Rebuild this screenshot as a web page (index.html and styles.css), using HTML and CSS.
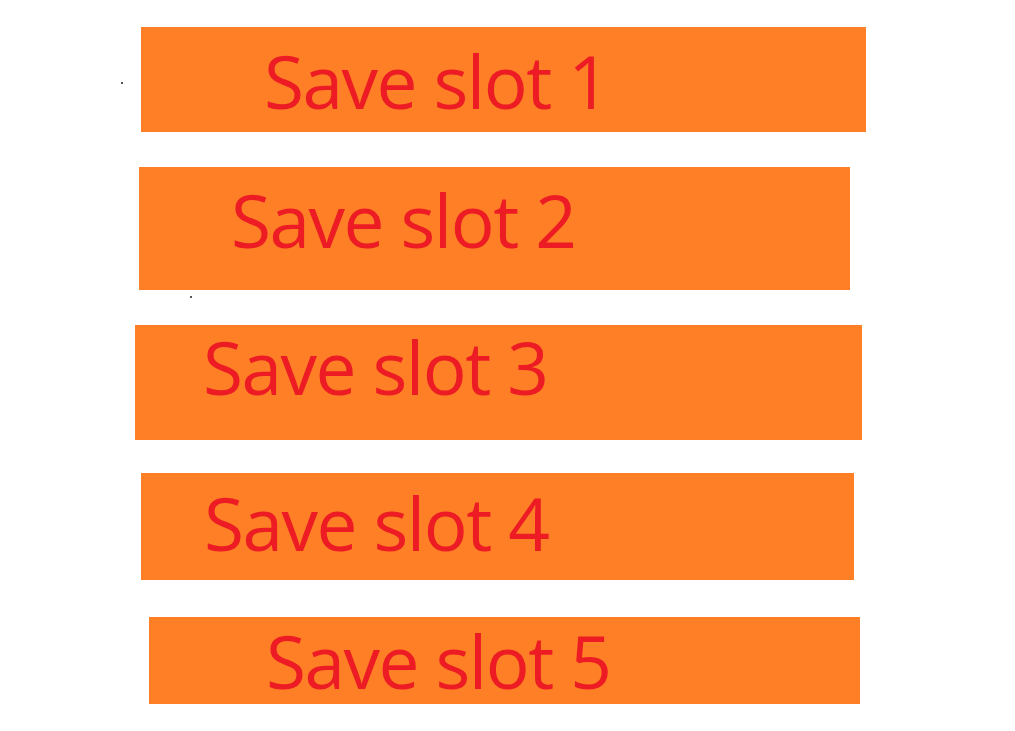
FILE: index.html
```html
<!DOCTYPE html>
<html lang="en">
<head>
<meta charset="utf-8">
<title>Save slots</title>
<link rel="stylesheet" href="styles.css">
</head>
<body>
<main class="slots">
  <div class="slot slot-1"><span class="label">Save slot 1</span></div>
  <div class="slot slot-2"><span class="label">Save slot 2</span></div>
  <div class="slot slot-3"><span class="label">Save slot 3</span></div>
  <div class="slot slot-4"><span class="label">Save slot 4</span></div>
  <div class="slot slot-5"><span class="label">Save slot 5</span></div>
  <span class="speck speck-a"></span>
  <span class="speck speck-b"></span>
</main>
</body>
</html>
```

FILE: styles.css
```css
html, body {
  margin: 0;
  padding: 0;
  background: #ffffff;
}

.slots {
  position: relative;
  width: 1015px;
  height: 731px;
  padding-top: 27px;
  box-sizing: border-box;
  display: flex;
  flex-direction: column;
  align-items: flex-start;
}

.slot {
  background: #ff7f27;
  box-sizing: border-box;
  font-family: "Open Sans", "Liberation Sans", sans-serif;
  font-size: 73px;
  line-height: 1;
  color: #ed1c24;
  white-space: nowrap;
}

.label {
  display: block;
  letter-spacing: -1.5px;
}

.slot-1 {
  margin-left: 141px;
  width: 725px;
  height: 105px;
  padding: 17px 0 0 123px;
}

.slot-2 {
  margin-top: 35px;
  margin-left: 139px;
  width: 711px;
  height: 123px;
  padding: 16px 0 0 92px;
}

.slot-3 {
  margin-top: 35px;
  margin-left: 135px;
  width: 727px;
  height: 115px;
  padding: 5px 0 0 68px;
}

.slot-4 {
  margin-top: 33px;
  margin-left: 141px;
  width: 713px;
  height: 107px;
  padding: 13px 0 0 63px;
}

.slot-5 {
  margin-top: 37px;
  margin-left: 149px;
  width: 711px;
  height: 87px;
  padding: 7px 0 0 117px;
}

.speck {
  position: absolute;
  width: 2px;
  height: 2px;
  background: #555555;
}

.speck-a {
  left: 121px;
  top: 82px;
}

.speck-b {
  left: 190px;
  top: 296px;
}
```
